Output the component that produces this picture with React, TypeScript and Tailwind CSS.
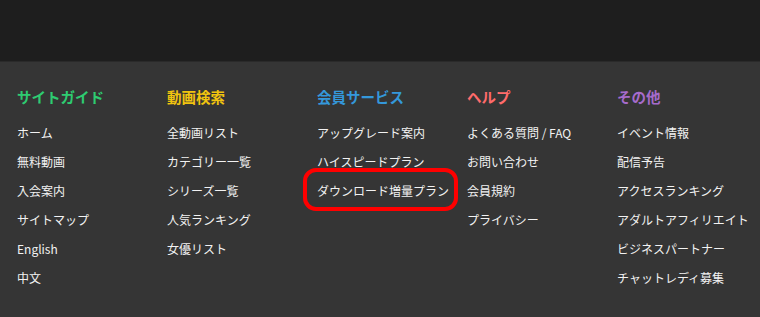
const columns = [
  {
    title: "サイトガイド",
    color: "text-[#2ecc71]",
    items: ["ホーム", "無料動画", "入会案内", "サイトマップ", "English", "中文"],
  },
  {
    title: "動画検索",
    color: "text-[#f1c40f]",
    items: ["全動画リスト", "カテゴリー一覧", "シリーズ一覧", "人気ランキング", "女優リスト"],
  },
  {
    title: "会員サービス",
    color: "text-[#3498db]",
    items: ["アップグレード案内", "ハイスピードプラン", "ダウンロード増量プラン"],
  },
  {
    title: "ヘルプ",
    color: "text-[#ff6b6b]",
    items: ["よくある質問 / FAQ", "お問い合わせ", "会員規約", "プライバシー"],
  },
  {
    title: "その他",
    color: "text-[#a66bcc]",
    items: [
      "イベント情報",
      "配信予告",
      "アクセスランキング",
      "アダルトアフィリエイト",
      "ビジネスパートナー",
      "チャットレディ募集",
    ],
  },
];

const App = () => {
  return (
    <div className="h-[317px] w-[760px] overflow-hidden bg-[#353535] font-['Noto_Sans_CJK_JP','Noto_Sans',sans-serif]">
      <div className="h-[62px] border-b border-[#2a2a2a] bg-[#1e1e1e]" />

      <footer className="flex pl-[17px] pt-[25px]">
        {columns.map((col) => (
          <div key={col.title} className="w-[150px] shrink-0">
            <h3 className={`text-[14.5px] font-bold leading-[20px] ${col.color}`}>{col.title}</h3>
            <ul className="mt-[11px]">
              {col.items.map((item) => (
                <li key={item} className="relative text-[12px] leading-[29px] text-[#f2f2f2]">
                  {item}
                  {item === "ダウンロード増量プラン" && (
                    <span className="absolute -left-[14px] -top-[8px] h-[43px] w-[155px] rounded-[13px] border-4 border-[#ff0000]" />
                  )}
                </li>
              ))}
            </ul>
          </div>
        ))}
      </footer>
    </div>
  );
};

export default App;
